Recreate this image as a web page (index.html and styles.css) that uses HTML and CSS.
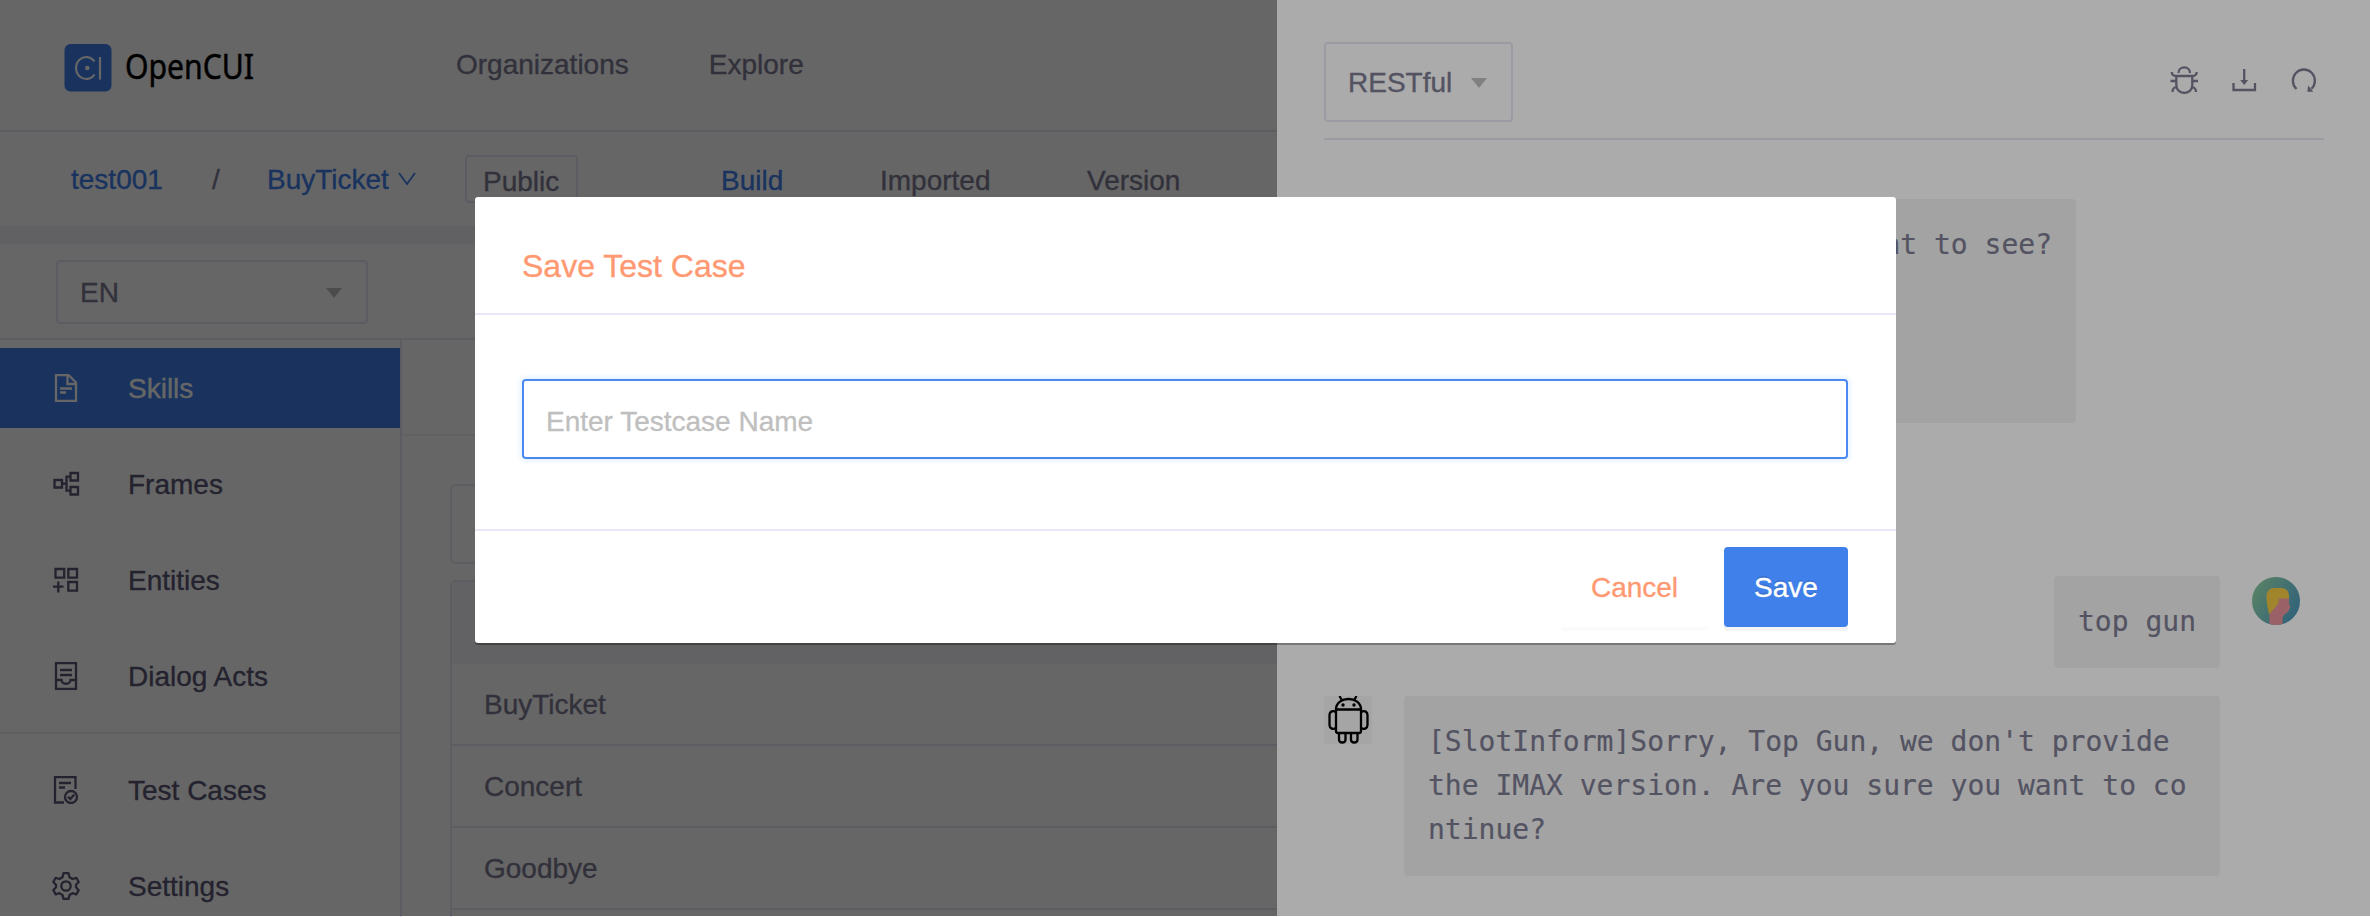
FILE: index.html
```html
<!DOCTYPE html>
<html lang="en">
<head>
<meta charset="utf-8">
<title>OpenCUI</title>
<link rel="stylesheet" href="styles.css">
</head>
<body>
<div class="app">
  <header class="topbar">
    <svg class="logo" width="48" height="48" viewBox="0 0 48 48"><rect x=".5" width="47" height="47.500" rx="6" fill="#4080eb"/><path d="M30.500 17.500A10.200 11 0 1 0 30.500 30.500M36 13v22.500" fill="none" stroke="#fff" stroke-width="2.200"/><circle cx="23.300" cy="24" r="2.300" fill="#fff"/></svg>
    <svg class="wordmark" width="140" height="48" viewBox="0 0 140 48"><text x="0" y="35" textLength="129" lengthAdjust="spacingAndGlyphs">OpenCUI</text></svg>
    <nav class="topnav"><a>Organizations</a><a>Explore</a></nav>
  </header>
  <div class="subbar">
    <span class="crumb org">test001</span><span class="crumb slash">/</span><span class="crumb bot">BuyTicket</span>
    <svg class="chev" width="18" height="14" viewBox="0 0 18 14"><path d="M1 1l8 11 8-11" fill="none" stroke="currentColor" stroke-width="1.800"/></svg>
    <span class="tag">Public</span>
    <nav class="tabs"><a class="tab on">Build</a><a class="tab">Imported</a><a class="tab">Version</a></nav>
  </div>
  <div class="langbar"><div class="select lang"><span>EN</span><i class="caret"></i></div></div>
  <div class="body">
    <aside class="side">
      <div class="item active"><svg width="28" height="28" viewBox="0 0 28 28"><path d="M4 1h12.500L24 8.500V27H4zM15.500 1v9H24M8 14.500h12M8 18.500h6"/></svg><span>Skills</span></div>
      <div class="item"><svg width="28" height="28" viewBox="0 0 28 28"><path d="M2.500 10h7.500v7.500H2.500zM18.500 3H26v7.500h-7.500zM18.500 17H26v7.500h-7.500zM10 13.700h5M18.500 6.700H14.500v14h4"/></svg><span>Frames</span></div>
      <div class="item"><svg width="28" height="28" viewBox="0 0 28 28"><path d="M3.500 3h8.700v8.700H3.500zM16.300 3H25v8.700h-8.700zM16.300 16H25v8.700h-8.700zM1 20.700h10.500M6.300 15.500v11"/></svg><span>Entities</span></div>
      <div class="item"><svg width="28" height="28" viewBox="0 0 28 28"><path d="M4 1h20v26H4zM8 8h12M8 13h12M4 18h5.500c.5 5 8.500 5 9 0H24"/></svg><span>Dialog Acts</span></div>
      <div class="rule"></div>
      <div class="item"><svg width="28" height="28" viewBox="0 0 28 28"><path d="M23.500 13V1H3v25.500h9M7 7h12M7 11.500h6"/><circle cx="19" cy="21" r="6"/><path d="M16 20.700l2.300 2.300 4-4.500"/></svg><span>Test Cases</span></div>
      <div class="item"><svg width="28" height="28" viewBox="0 0 28 28"><path d="M11.500 1.200h5l1 4 3 1.800 3.800-1.200 2.400 4.200-2.700 2.800v2.500l2.700 2.900-2.400 4.100-3.800-1.100-3 1.700-1 4h-5l-1-4-3-1.700-3.800 1.100-2.400-4.100L4 15.300v-2.500L1.300 10l2.400-4.200L7.500 7l3-1.800z" stroke-linejoin="round"/><circle cx="14" cy="14" r="4.700"/></svg><span>Settings</span></div>
    </aside>
    <main class="content">
      <div class="strip"></div>
      <div class="search"></div>
      <div class="table"><div class="thead"></div><div class="row">BuyTicket</div><div class="row">Concert</div><div class="row">Goodbye</div><div class="row"></div></div>
    </main>
  </div>
</div>
<div class="mask page-mask"></div>

<section class="drawer">
  <div class="tools">
    <div class="select channel"><span>RESTful</span><i class="caret"></i></div>
    <div class="actions">
      <svg width="28" height="28" viewBox="0 0 28 28"><path d="M8.500 7c0-7.500 11.500-7.500 11.500 0M6.300 10h16v9c0 10.500-16 10.500-16 0zM1.800 6c0 2.500 1.500 4 4.500 4M26.700 6c0 2.500-1.500 4-4.500 4M.5 15h6M22 15h6M2.500 26c0-3 1-4.500 4.500-5.500M26 26c0-3-1-4.500-4.500-5.500"/></svg>
      <svg width="28" height="28" viewBox="0 0 28 28"><path d="M3.500 17v7h21.500v-7M14.200 3v12"/><path class="fill" d="M10.200 14h8L14.200 19z"/></svg>
      <svg width="28" height="28" viewBox="0 0 28 28"><path d="M6.500 23A11 11.200 0 1 1 21.500 22.800"/><path class="fill" d="M18.300 19.500l5 6.300h-6z"/></svg>
    </div>
  </div>
  <div class="chat">
    <div class="msg first"><div class="bubble wide">want to see?</div></div>
    <div class="msg user"><div class="bubble">top gun</div>
      <svg class="avatar" width="48" height="48" viewBox="0 0 48 48"><defs><linearGradient id="g" x1="0" y1=".2" x2="1" y2=".8"><stop offset="0" stop-color="#86c397"/><stop offset="1" stop-color="#4791b8"/></linearGradient><clipPath id="c"><circle cx="24" cy="24" r="24"/></clipPath></defs><g clip-path="url(#c)"><rect width="48" height="48" fill="url(#g)"/><path d="M25 21h12v6l1.500 3.500-1.500 1.500c0 2-1 3.500-2.500 4-2 1-4 3-4 5.500V48H17.500V37z" fill="#e69299"/><path d="M14.500 20c0-6 3-9 8-9h7c4.500 0 8 3 7.500 10.500H26.500c2 5-4 9-9.500 16-1-6-2.500-11-2.500-17.500z" fill="#efc643"/></g></svg></div>
    <div class="msg bot-msg"><svg class="avatar" width="48" height="48" viewBox="0 0 48 48"><rect width="48" height="48" fill="#f6f6f6"/><g fill="none" stroke="#000" stroke-width="2.300"><path d="M12 13.500C12-.5 37-.5 37 13.500zM12 13.500h25V35q0 2-2 2H14q-2 0-2-2zM15.500 0l2.500 4.500M32.500 0L30 4.500"/><path d="M12 16c-4-2-6.500 0-6.500 3v10c0 3 3 5 6.500 3M37 16c4-2 6.500 0 6.500 3v10c0 3-3 5-6.500 3M15 37v6.500c0 4 6.500 4 6.500 0V37M27 37v6.500c0 4 6.500 4 6.500 0V37"/></g><circle cx="19" cy="9" r="1.700"/><circle cx="30" cy="9" r="1.700"/></svg>
      <div class="bubble">[SlotInform]Sorry, Top Gun, we don't provide<br>the IMAX version. Are you sure you want to co<br>ntinue?</div></div>
  </div>
</section>
<div class="mask modal-mask"></div>

<div class="modal">
  <div class="modal-head">Save Test Case</div>
  <div class="modal-body"><input class="field" type="text" placeholder="Enter Testcase Name"></div>
  <div class="modal-foot"><button class="btn cancel">Cancel</button><button class="btn save">Save</button></div>
</div>
</body>
</html>
```
FILE: styles.css
```css
* { box-sizing: border-box; }
html, body { height: 100%; }
body {
  margin: 0;
  overflow: hidden;
  background: #fff;
  color: #7d7c93;
  font: 28px/32px "Liberation Sans", Arial, sans-serif;
  -webkit-text-stroke: .35px currentColor;
}

.app { height: 917px; overflow: hidden; color: #7d7c93; }
.topbar { height: 132px; padding-left: 64px; border-bottom: 2px solid #e8e7f5; display: flex; align-items: flex-start; }
.logo { margin-top: 44px; }
.wordmark { margin: 44px 0 0 13px; overflow: visible; }
.wordmark text { font: 34px "Noto Sans", sans-serif; fill: #000; stroke: #000; stroke-width: .5px; }
.topnav { display: flex; gap: 80px; margin: 49px 0 0 191px; }

.subbar { height: 94px; display: flex; align-items: flex-start; padding: 23px 0 0 71px; white-space: nowrap; }
.crumb { margin-top: 9px; line-height: 32px; }
.org, .bot, .chev, .tab.on { color: #4080eb; }
.org { width: 141px; }
.slash { width: 55px; }
.bot { width: 123px; }
.chev { margin: 17px 0 0 8px; }
.tag { margin-left: 49px; width: 113px; height: 48px; border: 2px solid #e8e7f5; border-radius: 4px; padding: 9px 0 0 16px; }
.tabs { display: flex; margin: 10px 0 0 143px; }
.tab { width: 159px; }
.tab + .tab { width: 207px; }

.langbar { height: 114px; border-top: 18px solid #f2f2f7; border-bottom: 2px solid #e8e7f5; padding: 16px 0 0 56px; }
.select { border: 2px solid #e8e7f5; border-radius: 4px; display: flex; align-items: center; justify-content: space-between; }
.caret { border: solid transparent; border-width: 10px 8.500px 0; border-top-color: #bfbfbf; margin-top: 2px; }
.lang { width: 312px; height: 64px; padding: 0 24px 0 22px; }
.lang span { padding-top: 2px; }

.body { display: flex; height: 577px; }
.side { width: 402px; border-right: 2px solid #e8e7f5; padding-top: 8px; color: #5a5776; }
.item { height: 80px; margin-bottom: 16px; padding-left: 52px; display: flex; align-items: center; }
.item svg { margin-right: 48px; fill: none; stroke: currentColor; stroke-width: 2.300; }
.item span { padding-top: 2px; }
.active { background: #4080eb; color: #fff; }
.rule { height: 2px; background: #f0f0f4; margin-bottom: 16px; }
.content { flex: 1; }
.strip { height: 96px; border-bottom: 2px solid #f2f2f7; margin-bottom: 48px; }
.search { height: 80px; margin: 0 0 16px 48px; border: 2px solid #e8e7f5; border-radius: 6px; }
.table { margin-left: 48px; border: 2px solid #e8e7f5; border-radius: 6px 6px 0 0; }
.thead { height: 82px; background: #f5f5fa; border-bottom: 2px solid #f2f2f7; }
.row { height: 82px; border-bottom: 2px solid #e8e7f5; padding: 25px 0 0 32px; }

.mask { position: absolute; top: 0; left: 0; right: 0; height: 916px; }
.page-mask { background: rgba(0, 0, 0, .4); }
.modal-mask { background: rgba(0, 0, 0, .33); }

.drawer { position: absolute; top: 0; right: 0; width: 1093px; height: 917px; background: #fff; padding: 42px 46px 0 47px; overflow: hidden; }
.tools { height: 98px; border-bottom: 2px solid #e8e7f5; display: flex; justify-content: space-between; }
.channel { width: 189px; height: 80px; padding: 0 24px 0 22px; }
.channel span { padding-top: 2px; }
.actions { display: flex; gap: 32px; padding: 24px 6px 0 0; }
.actions svg { fill: none; stroke: currentColor; stroke-width: 2.300; }
.actions .fill { fill: currentColor; stroke: none; }
.chat { padding-top: 59px; font: 28px/44px "DejaVu Sans Mono", monospace; -webkit-text-stroke: .2px currentColor; }
.msg { display: flex; align-items: flex-start; white-space: pre; }
.bubble { background: #f4f4f4; border-radius: 4px; padding: 24px; }
.first { height: 377px; padding-left: 80px; }
.wide { width: 672px; height: 224px; text-align: right; }
.user { justify-content: flex-end; padding-right: 24px; height: 120px; }
.user .avatar { margin: 1px 0 0 32px; }
.bot-msg .avatar { margin-right: 32px; }
.bot-msg .bubble { width: 816px; height: 180px; }

.modal { position: absolute; left: 475px; top: 197px; width: 1421px; height: 446px; background: #fff; border-radius: 3px; box-shadow: 0 2px 0 rgba(0, 0, 0, .3); }
.modal-head { height: 118px; border-bottom: 2px solid #e8e7f5; padding: 51px 47px 0; font-size: 32px; line-height: 36px; color: #ff9972; }
.modal-body { height: 216px; border-bottom: 2px solid #e8e7f5; padding: 64px 48px 0 47px; }
.field { display: block; width: 100%; height: 80px; padding: 6px 22px 0; border: 2px solid #4a8af0; border-radius: 4px; outline: 0; font: inherit; background: #fff; box-shadow: 0 0 5px 2px #e3f1ff; }
.field::placeholder { color: #bfbfbf; opacity: 1; }
.modal-foot { display: flex; justify-content: flex-end; gap: 16px; padding: 16px 48px 0; }
.btn { height: 80px; border: 0; border-radius: 4px; font: inherit; padding: 2px 0 0; }
.cancel { width: 147px; background: #fff; color: #ff9972; box-shadow: 0 4px 0 rgba(0, 0, 0, .015); }
.save { width: 124px; background: #4080eb; color: #fff; box-shadow: 0 4px 0 rgba(0, 0, 0, .043); text-shadow: 0 -2px 0 rgba(0, 0, 0, .12); }
```
